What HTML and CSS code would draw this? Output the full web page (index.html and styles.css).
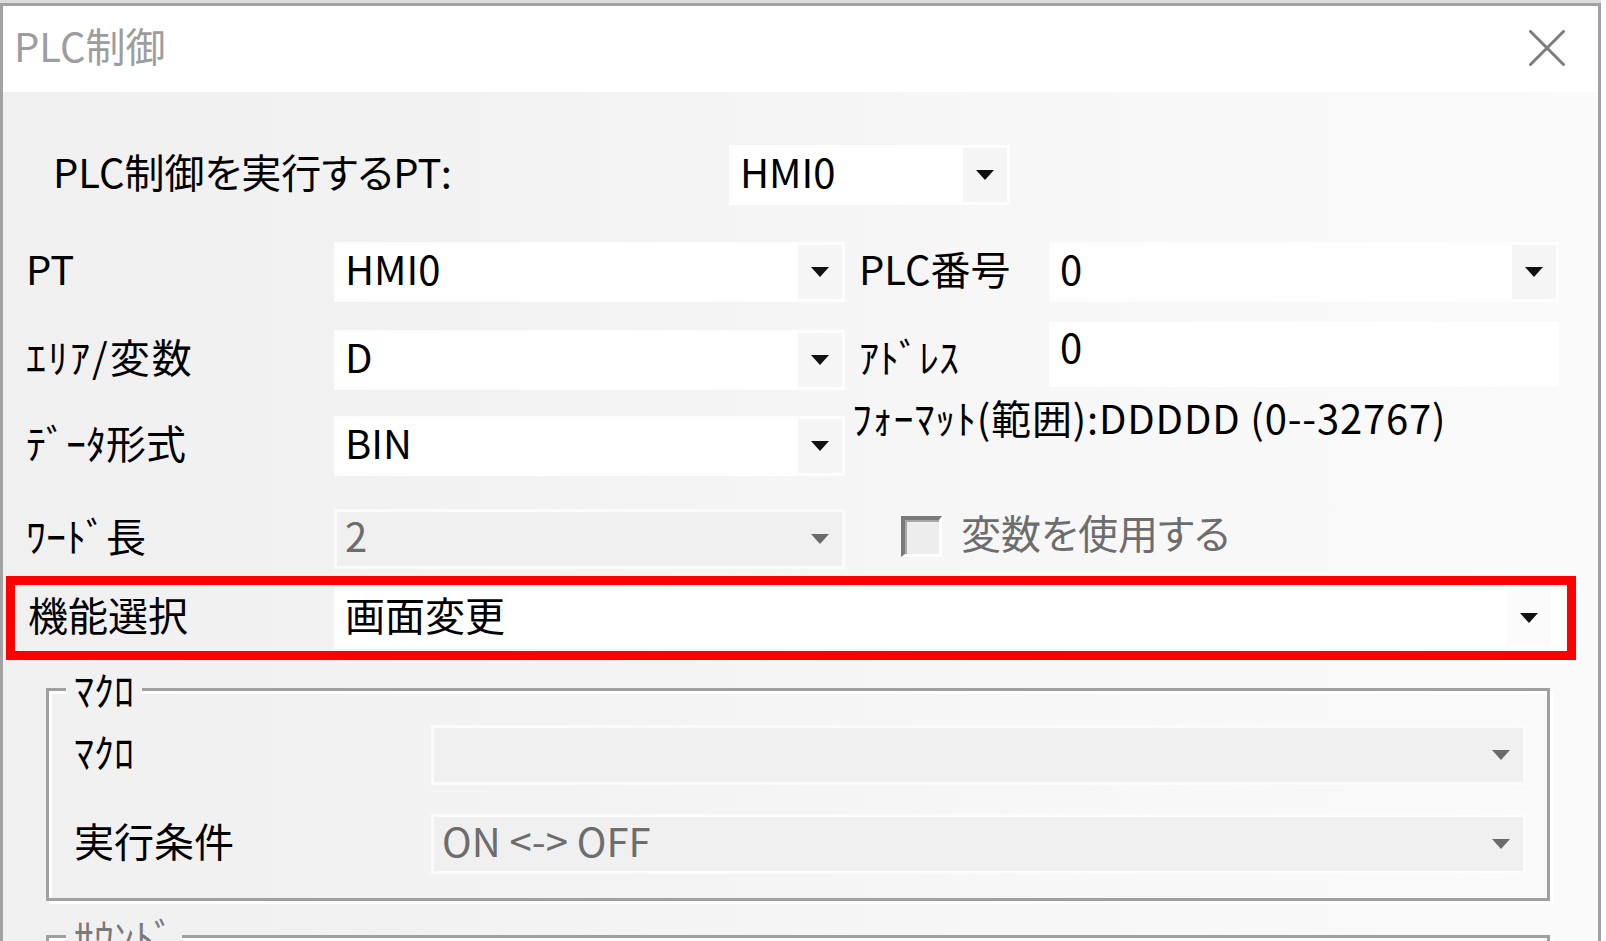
FILE: index.html
```html
<!DOCTYPE html>
<html lang="ja">
<head>
<meta charset="utf-8">
<title>PLC制御</title>
<link rel="stylesheet" href="styles.css">
</head>
<body>
<div class="window">
  <div class="titlebar">
    <span class="title">PLC制御</span>
    <svg class="close" viewBox="0 0 36 36" width="36" height="36"><path d="M1.5 1.5 L34.5 34.5 M34.5 1.5 L1.5 34.5" stroke="#7c7c7c" stroke-width="3" stroke-linecap="round" fill="none"/></svg>
  </div>
  <div class="body">
    <div class="row row0">
      <span class="label lbl-exec">PLC制御を実行するPT:</span>
      <div class="combo c0"><span class="val">HMI0</span><span class="btn"><i class="arrow"></i></span></div>
    </div>
    <div class="row row1">
      <span class="label lcol">PT</span>
      <div class="combo c1"><span class="val">HMI0</span><span class="btn"><i class="arrow"></i></span></div>
      <span class="label rcol">PLC番号</span>
      <div class="combo c2"><span class="val">0</span><span class="btn"><i class="arrow"></i></span></div>
    </div>
    <div class="row row2">
      <span class="label lcol wide">ｴﾘｱ/変数</span>
      <div class="combo c1"><span class="val">D</span><span class="btn"><i class="arrow"></i></span></div>
      <span class="label rcol">ｱﾄﾞﾚｽ</span>
      <div class="edit">0</div>
    </div>
    <div class="row row3">
      <span class="label lcol">ﾃﾞｰﾀ形式</span>
      <div class="combo c1"><span class="val">BIN</span><span class="btn"><i class="arrow"></i></span></div>
      <span class="fmt">ﾌｫｰﾏｯﾄ(範囲):DDDDD (0--32767)</span>
    </div>
    <div class="row row4">
      <span class="label lcol">ﾜｰﾄﾞ長</span>
      <div class="combo c1 disabled"><span class="val">2</span><span class="btn"><i class="arrow"></i></span></div>
      <span class="check"></span>
      <span class="label check-label">変数を使用する</span>
    </div>
    <div class="redbox">
      <span class="label lcol-red">機能選択</span>
      <div class="combo cfull"><span class="val">画面変更</span><span class="btn"><i class="arrow"></i></span></div>
    </div>
    <fieldset class="group">
      <legend>ﾏｸﾛ</legend>
      <div class="grow">
        <span class="label gcol">ﾏｸﾛ</span>
        <div class="combo cg disabled"><span class="val"></span><span class="btn"><i class="arrow"></i></span></div>
      </div>
      <div class="grow grow2">
        <span class="label gcol">実行条件</span>
        <div class="combo cg disabled"><span class="val">ON &lt;-&gt; OFF</span><span class="btn"><i class="arrow"></i></span></div>
      </div>
    </fieldset>
    <fieldset class="group group2">
      <legend>ｻｳﾝﾄﾞ</legend>
      <div class="grow">
        <span class="label gcol">ｻｳﾝﾄﾞ</span>
      </div>
    </fieldset>
  </div>
</div>
</body>
</html>
```

FILE: styles.css
```css
* { box-sizing: border-box; }
html, body { margin: 0; padding: 0; }
body {
  width: 1606px;
  height: 941px;
  overflow: hidden;
  background: #ffffff;
  font-family: "Noto Sans CJK JP", "Noto Sans", sans-serif;
  font-size: 40px;
  line-height: 46px;
  color: #000;
  font-feature-settings: "palt";
}
.window {
  margin-top: 3px;
  width: 1601px;
  height: 938px;
  border: 3px solid #a2a2a2;
  border-bottom: none;
  box-shadow: 0 -3px 0 #dcdcdc;
  display: flex;
  flex-direction: column;
  overflow: hidden;
}
.titlebar {
  height: 86px;
  flex: none;
  background: #fff;
  display: flex;
  align-items: center;
  justify-content: space-between;
  padding: 0 33px 0 11px;
}
.title { color: #9d9d9d; font-size: 40px; margin-top: -8px; }
.close { display: block; margin-top: -2px; }
.body {
  flex: 1;
  background: linear-gradient(to right, #f0f0f0 0%, #f3f3f3 35%, #f7f7f7 65%, #fafafa 100%);
  padding: 53px 0 0 23px;
  overflow: hidden;
}
.row { display: flex; align-items: center; height: 60px; }
.row1 { margin-top: 37px; }
.row2 { margin-top: 28px; }
.row3 { margin-top: 26px; }
.row4 { margin-top: 33px; }
.label { white-space: nowrap; flex: none; padding-bottom: 8px; }
.wide { letter-spacing: 2px; }
.lbl-exec { margin-left: 27px; width: 676px; }
.lcol { width: 308px; }
.rcol { margin-left: 14px; width: 190px; }

.combo {
  display: flex;
  align-items: center;
  height: 60px;
  background: #fff;
  border: 3px solid #fdfdfd;
  padding-left: 8px;
  flex: none;
}
.combo .val { flex: 1; white-space: nowrap; padding-bottom: 8px; min-height: 46px; }
.combo .btn {
  width: 44px;
  align-self: stretch;
  background: #f5f5f5;
  display: flex;
  align-items: center;
  justify-content: center;
}
.arrow {
  display: block;
  width: 0;
  height: 0;
  border-left: 9px solid transparent;
  border-right: 9px solid transparent;
  border-top: 10px solid #111;
}
.c0 { width: 281px; }
.c1 { width: 511px; }
.c2 { width: 510px; }
.combo.disabled { background: #f0f0f0; border-color: #fbfbfb; color: #6d6d6d; }
.combo.disabled .btn { background: transparent; }
.combo.disabled .arrow { border-top-color: #6a6a6a; }

.edit {
  width: 510px;
  height: 65px;
  align-self: flex-start;
  margin-top: -8px;
  background: #fff;
  padding: 1px 11px 0;
  flex: none;
}
.fmt { white-space: nowrap; align-self: flex-start; margin-left: 7px; margin-top: -22px; letter-spacing: 0.8px; }

.check {
  flex: none;
  width: 41px;
  height: 41px;
  margin-left: 56px;
  border-style: solid;
  border-width: 4px 3px 3px 4px;
  border-color: #7a7a7a #ffffff #ffffff #7a7a7a;
  background: #ededed;
  box-shadow: inset 2px 2px 0 #a8a8a8;
  margin-top: -6px;
}
.check-label { margin-left: 19px; color: #6d6d6d; margin-top: -6px; }

.redbox {
  margin: 7px 0 0 -20px;
  width: 1570px;
  height: 84px;
  border: 9px solid #ff0000;
  display: flex;
  align-items: center;
  padding-left: 13px;
}
.lcol-red { width: 306px; }
.cfull { flex: 1; height: 62px; padding-right: 13px; }
.cfull .btn { background: #fbfbfb; }

.group {
  margin: 6px 0 0 20px;
  width: 1504px;
  border: 3px solid #a0a0a0;
  padding: 13px 0 24px 0;
  box-shadow: 3px 3px 0 #ffffff, inset 3px 3px 0 #ffffff;
  min-width: 0;
}
.group legend {
  margin-left: 17px;
  padding: 0 8px;
  line-height: 46px;
  background: #f1f1f1;
}
.grow { display: flex; align-items: center; height: 60px; padding-left: 25px; }
.grow2 { margin-top: 29px; }
.gcol { width: 357px; }
.cg { width: 1095px; }
.group2 { margin-top: 12px; }
.group2 legend { color: #7a7a7a; }
.group2 .gcol { color: #7a7a7a; }
```
